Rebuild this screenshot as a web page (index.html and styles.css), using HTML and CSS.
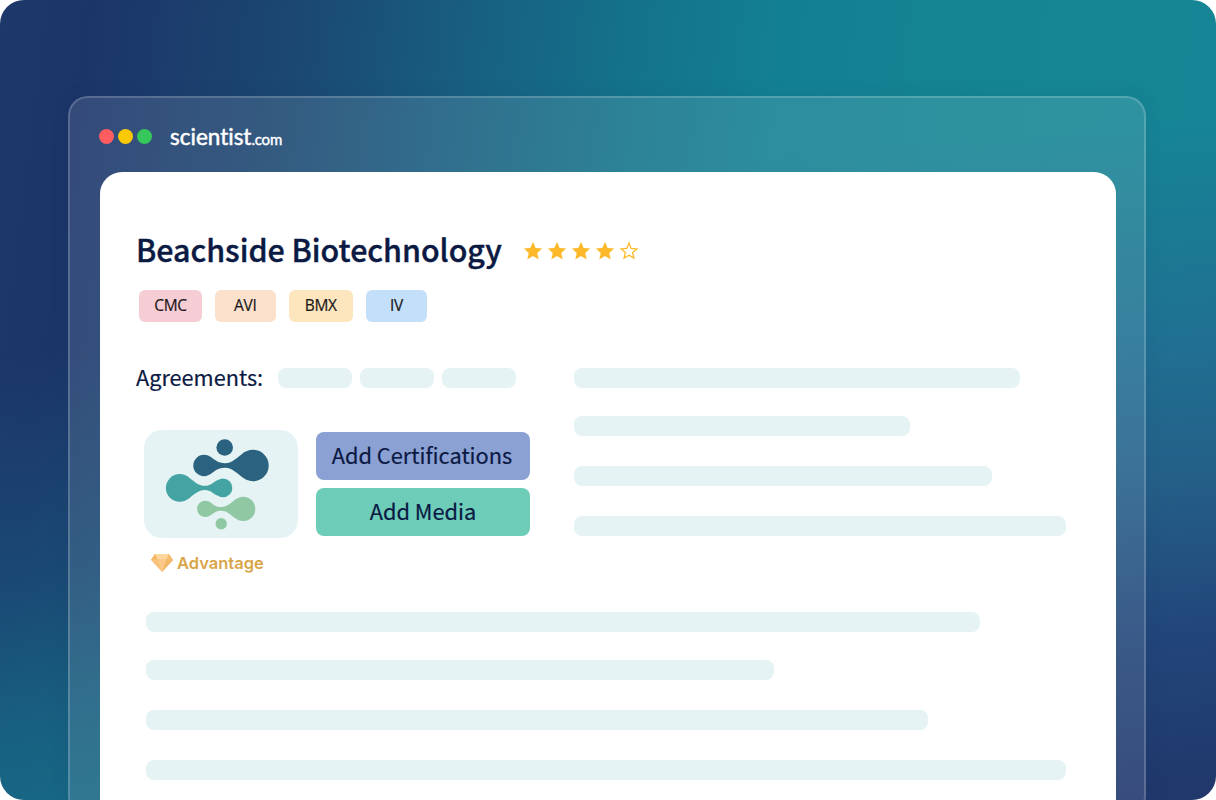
FILE: index.html
```
<!DOCTYPE html>
<html lang="en">
<head>
  <meta charset="utf-8">
  <title>Beachside Biotechnology - Scientist.com</title>
  <link rel="stylesheet" href="styles.css">
</head>
<body>
  <svg width="0" height="0" class="defs">
    <symbol id="star" viewBox="0 0 20 20">
      <path d="M10 .8l2.600 6.100 6.600.6-5 4.400 1.500 6.500L10 15l-5.700 3.400 1.500-6.500-5-4.400 6.600-.6z"/>
    </symbol>
    <symbol id="star-empty" viewBox="0 0 20 20">
      <path d="M10 2.200l2.200 5.200 5.700.5-4.300 3.700 1.300 5.500L10 14.200l-4.900 2.900 1.300-5.500-4.300-3.700 5.700-.5z"/>
    </symbol>
  </svg>
  <div class="hero">
    <div class="window">
      <div class="titlebar">
        <div class="dots">
          <span class="dot red"></span>
          <span class="dot yellow"></span>
          <span class="dot green"></span>
        </div>
        <div class="brand">scientist<span>.com</span></div>
      </div>
      <div class="card">
        <div class="heading">
          <h1>Beachside Biotechnology</h1>
          <div class="stars">
            <svg><use href="#star"/></svg>
            <svg><use href="#star"/></svg>
            <svg><use href="#star"/></svg>
            <svg><use href="#star"/></svg>
            <svg class="empty"><use href="#star-empty"/></svg>
          </div>
        </div>
        <div class="tags">
          <span class="tag cmc">CMC</span>
          <span class="tag avi">AVI</span>
          <span class="tag bmx">BMX</span>
          <span class="tag iv">IV</span>
        </div>
        <div class="columns">
          <div class="left">
            <div class="agreements">
              <span class="label">Agreements:</span>
              <div class="bar pill"></div>
              <div class="bar pill"></div>
              <div class="bar pill"></div>
            </div>
            <div class="profile">
              <div class="logo">
                <svg width="154" height="108" viewBox="0 0 154 108">
                  <g fill="#2a627f">
                    <circle cx="80.700" cy="17.500" r="8.300"/>
                    <circle cx="60" cy="35.500" r="10.700"/>
                    <circle cx="109" cy="35.500" r="15.700"/>
                    <path d="M66 26.600C71 30 74 33.200 81 33.200C89 33.200 93 27 100 22.700V48.300C93 44 89 37.800 81 37.800C74 37.800 71 41 66 44.400z"/>
                  </g>
                  <g fill="#43a4a3">
                    <circle cx="35.700" cy="57.900" r="13.800"/>
                    <circle cx="79" cy="57.900" r="9.300"/>
                    <path d="M44 46.900C50 51 54 55.800 61 55.800C67 55.800 69 52 74 50V65.800C69 64 67 60 61 60C54 60 50 65 44 68.900z"/>
                  </g>
                  <g fill="#90c8a3">
                    <circle cx="61.300" cy="78.900" r="8.200"/>
                    <circle cx="99.200" cy="78.900" r="12.100"/>
                    <circle cx="77.200" cy="93.800" r="5.700"/>
                    <path d="M66 72.200C70 75 72 77 77 77C84 77 87 72 92 69.200V88.600C87 86 84 80.800 77 80.800C72 80.800 70 83 66 85.600z"/>
                  </g>
                </svg>
              </div>
              <div class="actions">
                <button>Add Certifications</button>
                <button class="media">Add Media</button>
              </div>
            </div>
            <div class="advantage">
              <svg width="24" height="20" viewBox="0 0 24 20">
                <path d="M5 1h14l4 6-11 12L1 7z" fill="#f8c27c"/>
                <path d="M5 1h14l-2.500 5.500h-9z" fill="#fdd69d"/>
                <path d="M1 7l4-6 2.500 5.500z" fill="#f3b766"/>
                <path d="M23 7l-4-6-2.500 5.500z" fill="#f6bd70"/>
                <path d="M7.500 6.500h9L12 19z" fill="#fbc988"/>
                <path d="M16.500 6.500L23 7 12 19z" fill="#f3b768"/>
              </svg>
              <span>Advantage</span>
            </div>
          </div>
          <div class="right">
            <div class="bar r1"></div>
            <div class="bar r2"></div>
            <div class="bar r3"></div>
            <div class="bar r4"></div>
          </div>
        </div>
        <div class="lines">
          <div class="bar l1"></div>
          <div class="bar l2"></div>
          <div class="bar l3"></div>
          <div class="bar l4"></div>
        </div>
      </div>
    </div>
  </div>
</body>
</html>
```

FILE: styles.css
```
* {
  box-sizing: border-box;
}
body {
  margin: 0;
  background: #fff;
  color: #0b1a43;
  font-family: "Noto Sans CJK JP", "Noto Sans", sans-serif;
}
.defs {
  display: none;
}
.hero {
  height: 800px;
  padding: 96px 70px 0 68px;
  overflow: hidden;
  border-radius: 24px;
  /* side fades only show left and right of the card */
  background:
    linear-gradient(170deg, rgba(25, 82, 120, 0) 40%, rgba(25, 82, 122, .65) 64%, #185f80 80%, #166c88 96%) left / 50% 100% no-repeat,
    linear-gradient(175deg, rgba(34, 112, 148, 0) 20%, rgba(34, 108, 146, .85) 46%, #245f88 62%, #22467a 80%, #20386c 98%) right / 50% 100% no-repeat,
    linear-gradient(97deg, #1d386b 0%, #1c3569 7%, #1b4872 23%, #185d80 35%, #14728a 48%, #138092 60%, #158593 76%, #168596 100%);
}
.window {
  height: 720px;
  padding: 0 28px 0 30px;
  border: 2px solid rgba(255, 255, 255, .18);
  border-radius: 20px;
  background: rgba(255, 255, 255, .11);
  box-shadow: 0 0 20px rgba(20, 50, 90, .08);
}
.titlebar {
  display: flex;
  align-items: center;
  height: 74px;
}
.dots {
  display: flex;
  gap: 4px;
  margin: 2px 18px 0 -1px;
}
.dot {
  width: 15px;
  height: 15px;
  border-radius: 50%;
}
.red {
  background: #ff5d60;
}
.yellow {
  background: #f9c806;
}
.green {
  background: #36c85a;
}
.brand {
  margin-top: 5px;
  color: #fff;
  font-family: Lato, sans-serif;
  font-size: 22.5px;
  font-variant-ligatures: none;
  line-height: 30px;
  -webkit-text-stroke: .5px #fff;
}
.brand span {
  font-size: 15px;
  letter-spacing: -.2px;
  -webkit-text-stroke: .4px #fff;
}
.card {
  height: 660px;
  padding: 54px 36px 0;
  border-radius: 22px;
  background: #fff;
}
.heading {
  display: flex;
  align-items: center;
  height: 50px;
}
h1 {
  width: 387px;
  margin: -5px 0 0;
  font-size: 30.4px;
  font-weight: 500;
  line-height: 50px;
  white-space: nowrap;
  -webkit-text-stroke: .4px #0b1a43;
}
.stars {
  display: flex;
  gap: 4px;
}
.stars svg {
  width: 20px;
  height: 20px;
  fill: #fdb927;
}
.stars .empty {
  fill: none;
  stroke: #fdb927;
  stroke-width: 1.3;
}
.tags {
  display: flex;
  gap: 13px;
  margin: 14px 0 0 3px;
}
.tag {
  height: 32px;
  border-radius: 6px;
  color: #1b1718;
  font-family: "Open Sans", sans-serif;
  font-size: 15.5px;
  letter-spacing: -.3px;
  line-height: 31px;
  text-align: center;
  -webkit-text-stroke: .2px #1b1718;
}
.cmc {
  width: 63px;
  background: #f6cdd5;
}
.avi {
  width: 60.5px;
  background: #fbe1cc;
}
.bmx {
  width: 64.5px;
  background: #fde6bd;
}
.iv {
  width: 61px;
  background: #c3dff9;
}
.columns {
  display: flex;
  margin-top: 46px;
}
.bar {
  height: 20px;
  border-radius: 8px;
  background: #e5f3f4;
}
.left {
  width: 438px;
}
.agreements {
  display: flex;
  gap: 8px;
  height: 20px;
}
.label {
  width: 134px;
  font-size: 21.7px;
  line-height: 18px;
  -webkit-text-stroke: .2px #0b1a43;
}
.pill {
  width: 74px;
}
.profile {
  display: flex;
  gap: 18px;
  margin: 42px 0 0 8px;
}
.logo {
  width: 154px;
  height: 108px;
  border-radius: 18px;
  background: #e5f3f4;
}
.actions {
  display: flex;
  flex-direction: column;
  gap: 8px;
  padding-top: 2px;
}
button {
  width: 214px;
  height: 48px;
  padding: 0 2px 2px 0;
  border: none;
  border-radius: 8px;
  background: #8ba1d4;
  color: #0b1a43;
  font-family: inherit;
  font-size: 21.8px;
  line-height: 46px;
  -webkit-text-stroke: .2px #0b1a43;
}
.media {
  padding-right: 0;
  background: #6dcdb9;
}
.advantage {
  display: flex;
  align-items: center;
  gap: 3px;
  margin: 13px 0 0 14px;
  height: 24px;
  color: #d9a548;
  font-family: Inter, sans-serif;
  font-size: 16.5px;
  font-weight: 600;
}
.right {
  display: grid;
  row-gap: 30px;
  align-content: start;
}
.r1 {
  width: 446px;
}
.r2 {
  width: 336px;
  margin-top: -2px;
}
.r3 {
  width: 418px;
}
.r4 {
  width: 492px;
}
.lines {
  display: grid;
  row-gap: 30px;
  margin: 37px 0 0 10px;
}
.l1 {
  width: 834px;
}
.l2 {
  width: 628px;
  margin-top: -2px;
}
.l3 {
  width: 782px;
}
.l4 {
  width: 920px;
}
```
